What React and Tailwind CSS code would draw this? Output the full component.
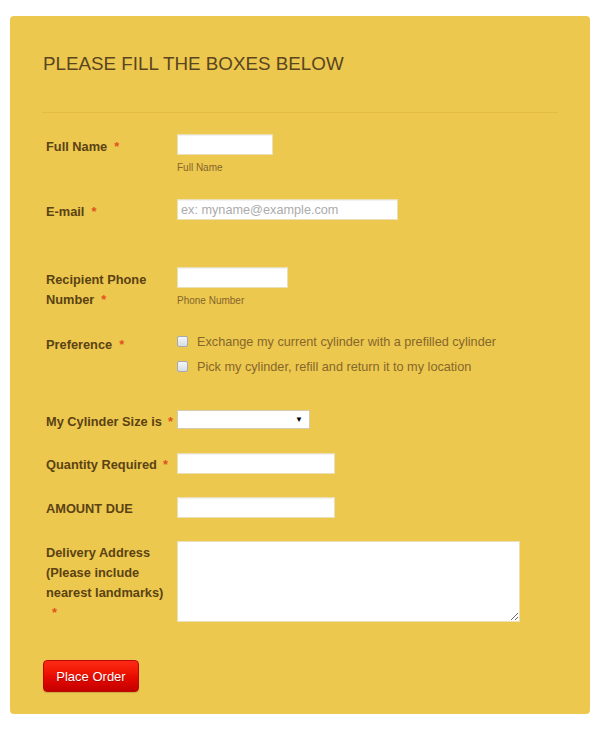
import React from "react";

const Star = ({ className = "" }) => (
  <span className={"text-[#e0541c] ml-[7px] " + className}>*</span>
);

const Label = ({ children, className = "" }) => (
  <div className={"w-[131px] shrink-0 text-[12.8px] leading-[20px] font-bold text-[#5b4213] " + className}>
    {children}
  </div>
);

const inputCls =
  "h-[21px] bg-white border border-[#eadfb6] shadow-[inset_0_1px_1px_rgba(0,0,0,0.06)] outline-none text-[12.7px] px-[3px] text-[#555]";

const Checkbox = () => (
  <span className="inline-block w-[11px] h-[11px] mt-[4px] rounded-[2px] border border-[#a3aab3] bg-gradient-to-b from-[#f4f6f8] to-[#d8dde3] shrink-0" />
);

export default function App() {
  return (
    <div className="w-[600px] h-[735px] bg-white pt-[16px] px-[10px]" style={{ fontFamily: '"Liberation Sans", Arial, sans-serif' }}>
      <div className="h-[698px] rounded-[4px] bg-[#ecc84f] pt-[37px] px-[32px] flex flex-col">
        <h1 className="text-[18.8px] leading-[22px] text-[#5a4520] ml-[1px]">PLEASE FILL THE BOXES BELOW</h1>
        <div className="mt-[37px] h-px bg-[#e2bc44]" />

        <div className="pl-[4px] flex flex-col">
          {/* Full Name */}
          <div className="mt-[21px] flex items-start">
            <Label className="pt-[3px]">Full Name<Star /></Label>
            <div className="flex flex-col">
              <input className={inputCls + " w-[96px]"} />
              <span className="mt-[7px] text-[10px] leading-[12px] text-[#86652b]">Full Name</span>
            </div>
          </div>

          {/* E-mail */}
          <div className="mt-[25px] flex items-start">
            <Label className="pt-[3px]">E-mail<Star /></Label>
            <input className={inputCls + " w-[221px] placeholder:text-[#ababab]"} placeholder="ex: myname@example.com" />
          </div>

          {/* Phone */}
          <div className="mt-[45px] flex items-start">
            <Label className="pt-[3px]">
              <div>Recipient Phone</div>
              <div>Number<Star /></div>
            </Label>
            <div className="flex flex-col">
              <input className={inputCls + " w-[111px]"} />
              <span className="mt-[7px] text-[10px] leading-[12px] text-[#86652b]">Phone Number</span>
            </div>
          </div>

          {/* Preference */}
          <div className="mt-[22px] flex items-start">
            <Label className="pt-[3px]">Preference<Star /></Label>
            <div className="flex flex-col gap-[5px] text-[12.7px] leading-[20px] text-[#86672a]">
              <div className="flex gap-[9px]">
                <Checkbox />
                <span>Exchange my current cylinder with a prefilled cylinder</span>
              </div>
              <div className="flex gap-[9px]">
                <Checkbox />
                <span>Pick my cylinder, refill and return it to my location</span>
              </div>
            </div>
          </div>

          {/* Cylinder size */}
          <div className="mt-[33px] flex items-start">
            <Label className="pt-[2px] whitespace-nowrap">My Cylinder Size is<span className="text-[#e0541c] ml-[6px]">*</span></Label>
            <div className="w-[133px] h-[19px] bg-white border border-[#d4ccb0] flex items-center justify-end pr-[6px]">
              <span className="text-[8px] leading-none text-black">▼</span>
            </div>
          </div>

          {/* Quantity */}
          <div className="mt-[21px] flex items-start">
            <Label className="pt-[2px] whitespace-nowrap">Quantity Required<span className="text-[#e0541c] ml-[6px]">*</span></Label>
            <input className={inputCls + " w-[158px]"} />
          </div>

          {/* Amount */}
          <div className="mt-[22px] flex items-start">
            <Label className="pt-[2px]">AMOUNT DUE</Label>
            <input className={inputCls + " w-[158px]"} />
          </div>

          {/* Delivery */}
          <div className="mt-[22px] flex items-start">
            <Label className="pt-[2px]">
              Delivery Address (Please include nearest landmarks)
              <br />
              <span className="text-[#e0541c] ml-[6px]">*</span>
            </Label>
            <textarea className="w-[343px] h-[81px] bg-white border border-[#eadfb6] outline-none resize" />
          </div>
        </div>

        <div className="mt-[37px] pl-[1px]">
          <button className="w-[96px] h-[32px] rounded-[4px] border border-[#b80a00] bg-gradient-to-b from-[#ff2a14] via-[#e80c00] to-[#c40000] text-white text-[13px] pt-[1px] [text-shadow:0_1px_0_rgba(0,0,0,0.25)] shadow-[0_1px_1px_rgba(0,0,0,0.15)]">
            Place Order
          </button>
        </div>
      </div>
    </div>
  );
}
